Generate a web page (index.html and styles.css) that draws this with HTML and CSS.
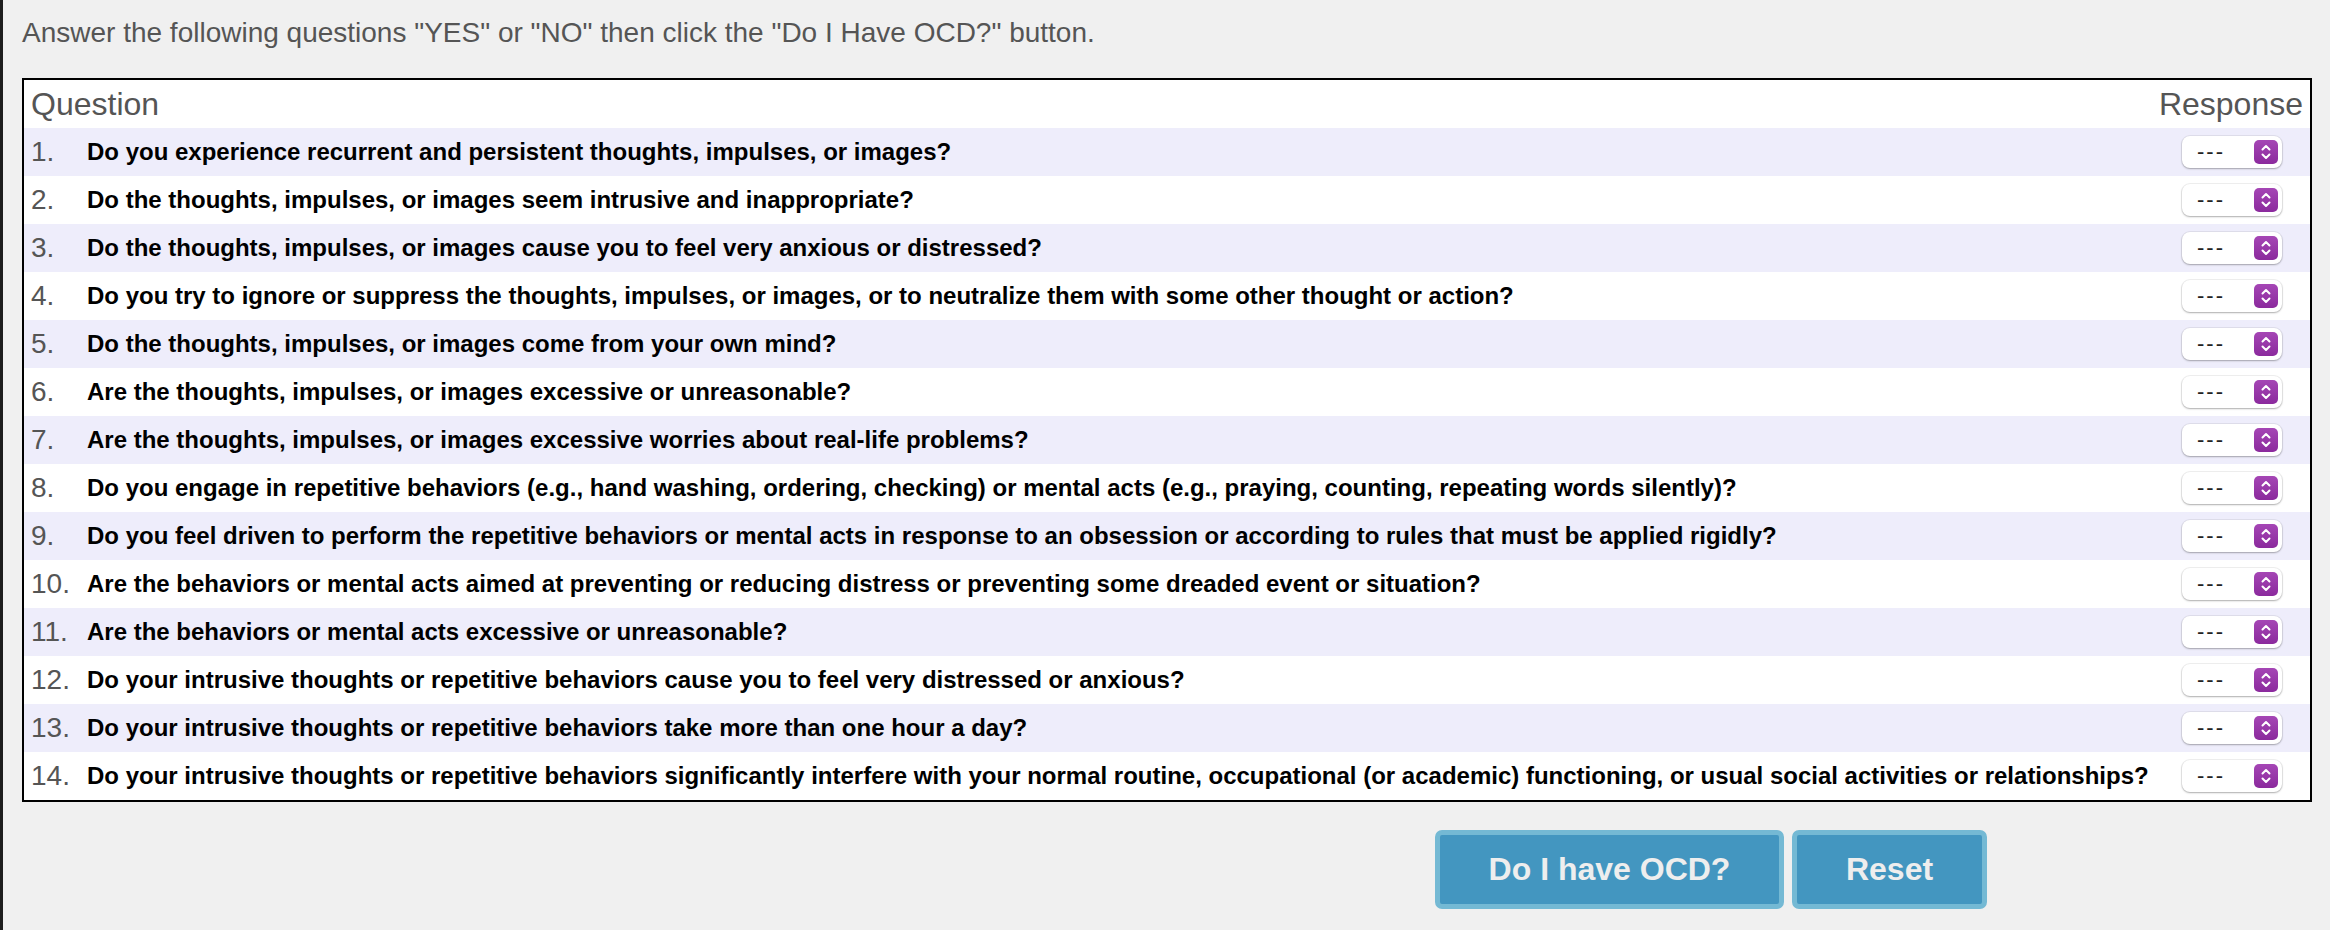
FILE: index.html
```html
<!DOCTYPE html>
<html lang="en">
<head>
<meta charset="utf-8">
<title>Do I Have OCD?</title>
<link rel="stylesheet" href="styles.css">
</head>
<body>
<div class="page">
  <p class="intro">Answer the following questions "YES" or "NO" then click the "Do I Have OCD?" button.</p>
  <table class="quiz">
    <thead>
      <tr><th class="head-q" colspan="2">Question</th><th class="head-r">Response</th></tr>
    </thead>
    <tbody>
      <tr><td class="num">1.</td><td class="q">Do you experience recurrent and persistent thoughts, impulses, or images?</td><td class="r"><span class="sel"><span class="val">---</span><span class="arrows"><svg viewBox="0 0 24 24"><path d="M8.5 9.5 L12 6 L15.5 9.5 M8.5 14.5 L12 18 L15.5 14.5"/></svg></span></span></td></tr>
      <tr><td class="num">2.</td><td class="q">Do the thoughts, impulses, or images seem intrusive and inappropriate?</td><td class="r"><span class="sel"><span class="val">---</span><span class="arrows"><svg viewBox="0 0 24 24"><path d="M8.5 9.5 L12 6 L15.5 9.5 M8.5 14.5 L12 18 L15.5 14.5"/></svg></span></span></td></tr>
      <tr><td class="num">3.</td><td class="q">Do the thoughts, impulses, or images cause you to feel very anxious or distressed?</td><td class="r"><span class="sel"><span class="val">---</span><span class="arrows"><svg viewBox="0 0 24 24"><path d="M8.5 9.5 L12 6 L15.5 9.5 M8.5 14.5 L12 18 L15.5 14.5"/></svg></span></span></td></tr>
      <tr><td class="num">4.</td><td class="q">Do you try to ignore or suppress the thoughts, impulses, or images, or to neutralize them with some other thought or action?</td><td class="r"><span class="sel"><span class="val">---</span><span class="arrows"><svg viewBox="0 0 24 24"><path d="M8.5 9.5 L12 6 L15.5 9.5 M8.5 14.5 L12 18 L15.5 14.5"/></svg></span></span></td></tr>
      <tr><td class="num">5.</td><td class="q">Do the thoughts, impulses, or images come from your own mind?</td><td class="r"><span class="sel"><span class="val">---</span><span class="arrows"><svg viewBox="0 0 24 24"><path d="M8.5 9.5 L12 6 L15.5 9.5 M8.5 14.5 L12 18 L15.5 14.5"/></svg></span></span></td></tr>
      <tr><td class="num">6.</td><td class="q">Are the thoughts, impulses, or images excessive or unreasonable?</td><td class="r"><span class="sel"><span class="val">---</span><span class="arrows"><svg viewBox="0 0 24 24"><path d="M8.5 9.5 L12 6 L15.5 9.5 M8.5 14.5 L12 18 L15.5 14.5"/></svg></span></span></td></tr>
      <tr><td class="num">7.</td><td class="q">Are the thoughts, impulses, or images excessive worries about real-life problems?</td><td class="r"><span class="sel"><span class="val">---</span><span class="arrows"><svg viewBox="0 0 24 24"><path d="M8.5 9.5 L12 6 L15.5 9.5 M8.5 14.5 L12 18 L15.5 14.5"/></svg></span></span></td></tr>
      <tr><td class="num">8.</td><td class="q">Do you engage in repetitive behaviors (e.g., hand washing, ordering, checking) or mental acts (e.g., praying, counting, repeating words silently)?</td><td class="r"><span class="sel"><span class="val">---</span><span class="arrows"><svg viewBox="0 0 24 24"><path d="M8.5 9.5 L12 6 L15.5 9.5 M8.5 14.5 L12 18 L15.5 14.5"/></svg></span></span></td></tr>
      <tr><td class="num">9.</td><td class="q">Do you feel driven to perform the repetitive behaviors or mental acts in response to an obsession or according to rules that must be applied rigidly?</td><td class="r"><span class="sel"><span class="val">---</span><span class="arrows"><svg viewBox="0 0 24 24"><path d="M8.5 9.5 L12 6 L15.5 9.5 M8.5 14.5 L12 18 L15.5 14.5"/></svg></span></span></td></tr>
      <tr><td class="num">10.</td><td class="q">Are the behaviors or mental acts aimed at preventing or reducing distress or preventing some dreaded event or situation?</td><td class="r"><span class="sel"><span class="val">---</span><span class="arrows"><svg viewBox="0 0 24 24"><path d="M8.5 9.5 L12 6 L15.5 9.5 M8.5 14.5 L12 18 L15.5 14.5"/></svg></span></span></td></tr>
      <tr><td class="num">11.</td><td class="q">Are the behaviors or mental acts excessive or unreasonable?</td><td class="r"><span class="sel"><span class="val">---</span><span class="arrows"><svg viewBox="0 0 24 24"><path d="M8.5 9.5 L12 6 L15.5 9.5 M8.5 14.5 L12 18 L15.5 14.5"/></svg></span></span></td></tr>
      <tr><td class="num">12.</td><td class="q">Do your intrusive thoughts or repetitive behaviors cause you to feel very distressed or anxious?</td><td class="r"><span class="sel"><span class="val">---</span><span class="arrows"><svg viewBox="0 0 24 24"><path d="M8.5 9.5 L12 6 L15.5 9.5 M8.5 14.5 L12 18 L15.5 14.5"/></svg></span></span></td></tr>
      <tr><td class="num">13.</td><td class="q">Do your intrusive thoughts or repetitive behaviors take more than one hour a day?</td><td class="r"><span class="sel"><span class="val">---</span><span class="arrows"><svg viewBox="0 0 24 24"><path d="M8.5 9.5 L12 6 L15.5 9.5 M8.5 14.5 L12 18 L15.5 14.5"/></svg></span></span></td></tr>
      <tr><td class="num">14.</td><td class="q">Do your intrusive thoughts or repetitive behaviors significantly interfere with your normal routine, occupational (or academic) functioning, or usual social activities or relationships?</td><td class="r"><span class="sel"><span class="val">---</span><span class="arrows"><svg viewBox="0 0 24 24"><path d="M8.5 9.5 L12 6 L15.5 9.5 M8.5 14.5 L12 18 L15.5 14.5"/></svg></span></span></td></tr>
    </tbody>
  </table>
  <div class="actions">
    <button class="btn btn-check" type="button">Do I have OCD?</button>
    <button class="btn btn-reset" type="button">Reset</button>
  </div>
</div>
</body>
</html>
```

FILE: styles.css
```css
html, body {
  margin: 0;
  padding: 0;
  background: #f0f0f0;
  font-family: "Liberation Sans", Arial, Helvetica, sans-serif;
}

body {
  min-height: 930px;
  border-left: 3px solid #1e1e1e;
  box-sizing: border-box;
}

.page {
  padding: 0 18px 0 19px;
}

.intro {
  margin: 0;
  padding-top: 17px;
  margin-bottom: 29px;
  font-size: 28px;
  line-height: 32px;
  color: #555;
}

.quiz {
  width: 100%;
  border: 2px solid #000;
  border-spacing: 0;
  background: #fff;
}

.quiz th,
.quiz td {
  height: 48px;
  padding: 0;
  vertical-align: middle;
}

.quiz th {
  font-size: 32px;
  font-weight: normal;
  color: #555;
}

.quiz .head-q {
  text-align: left;
  padding-left: 7px;
}

.quiz .head-r {
  text-align: right;
  padding-right: 7px;
}

.quiz tbody tr:nth-child(odd) {
  background: #eeedfb;
}

.quiz .num {
  width: 63px;
  padding-left: 7px;
  box-sizing: border-box;
  font-size: 28px;
  color: #555;
  white-space: nowrap;
}

.quiz .q {
  font-size: 24px;
  font-weight: bold;
  color: #000;
  white-space: nowrap;
}

.quiz .r {
  text-align: right;
  padding-right: 28px;
  width: 130px;
}

.sel {
  display: inline-flex;
  align-items: center;
  justify-content: space-between;
  width: 100px;
  height: 32px;
  box-sizing: border-box;
  padding: 0 4px 0 15px;
  background: #fff;
  border-radius: 8px;
  box-shadow: 0 1px 2px rgba(0, 0, 0, 0.28), 0 0 0 1px rgba(0, 0, 0, 0.06);
  vertical-align: middle;
}

.val {
  font-size: 22px;
  letter-spacing: 2px;
  color: #222;
  line-height: 1;
}

.arrows {
  width: 24px;
  height: 24px;
  border-radius: 5px;
  background: linear-gradient(#a546b5, #8b2a9d);
  display: flex;
}

.arrows svg {
  width: 24px;
  height: 24px;
  fill: none;
  stroke: #fff;
  stroke-width: 2;
  stroke-linecap: round;
  stroke-linejoin: round;
}

.actions {
  display: flex;
  justify-content: flex-end;
  gap: 8px;
  margin-top: 28px;
  margin-right: 325px;
}

.btn {
  height: 79px;
  box-sizing: border-box;
  border: 5px solid #74b9d4;
  border-radius: 7px;
  background: #4396c0;
  color: #eeeeee;
  font-family: "Liberation Sans", Arial, Helvetica, sans-serif;
  font-size: 32px;
  font-weight: bold;
  padding: 0;
}

.btn-check {
  width: 349px;
}

.btn-reset {
  width: 195px;
}
```
